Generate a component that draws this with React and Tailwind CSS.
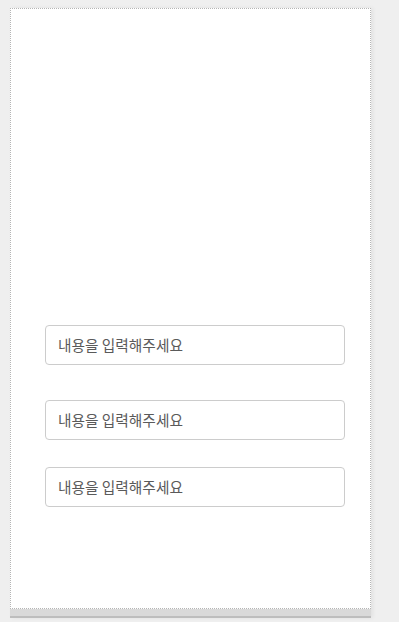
export default function App() {
  const font = { fontFamily: '"Malgun Gothic", "Noto Sans CJK KR", "Noto Sans", sans-serif' };
  return (
    <div className="w-[399px] h-[622px] bg-[#efefef] pt-[8px] pl-[10px]" style={font}>
      <div className="w-[361px] flex flex-col shadow-[2px_0_4px_rgba(0,0,0,0.06)]">
        <div className="h-[601px] bg-white border border-dotted border-[#b5b5b5] flex flex-col pt-[316px] pl-[34px]">
          <div className="w-[300px] h-[40px] border border-[#cccccc] rounded-[4px] flex items-center pl-[12px] text-[14.7px] text-[#5a5a5a]">
            내용을 입력해주세요
          </div>
          <div className="w-[300px] h-[40px] mt-[35px] border border-[#cccccc] rounded-[4px] flex items-center pl-[12px] text-[14.7px] text-[#5a5a5a]">
            내용을 입력해주세요
          </div>
          <div className="w-[300px] h-[40px] mt-[27px] border border-[#cccccc] rounded-[4px] flex items-center pl-[12px] text-[14.7px] text-[#5a5a5a]">
            내용을 입력해주세요
          </div>
        </div>
        <div className="h-[9px] bg-[#d9d9d9] border-b-2 border-[#bdbdbd]" />
      </div>
    </div>
  );
}
